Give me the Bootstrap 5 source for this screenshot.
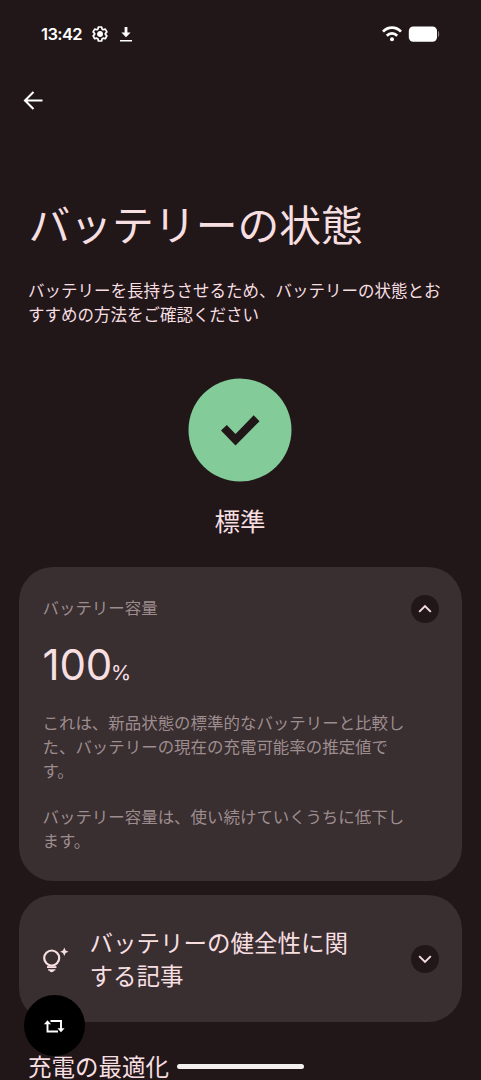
<!DOCTYPE html>
<html lang="ja">
<head>
<meta charset="utf-8">
<meta name="viewport" content="width=device-width, initial-scale=1">
<title>バッテリーの状態</title>
<link rel="stylesheet" href="https://cdn.jsdelivr.net/npm/bootstrap@5.3.0/dist/css/bootstrap.min.css">
<style>
  body { background: #211719; color: #f7dfe1; font-family: "Noto Sans CJK JP", sans-serif; }
  svg { display: block; flex: none; }
  .screen { height: 1080px; }
  .status-bar { height: 68px; padding: 0 41px 0 41px; color: #fff; }
  .clock { font: 600 16.5px/20px Inter, sans-serif; letter-spacing: -.6px; width: 51px; }
  .download-icon { margin-left: 11px; }
  .battery-icon { margin-left: 6px; }
  .app-bar { height: 64px; padding-left: 20px; color: #fff; }
  .page-title { font-size: 41.8px; line-height: 56px; font-weight: 400; margin: 63px 28px 0 28.5px; }
  .intro { font-size: 16.5px; line-height: 24px; margin: 27px 28px 0; width: 416px; }
  .health { margin-top: 52px; margin-right: 1px; }
  .health-label { font-size: 25.5px; line-height: 36px; margin-top: 20px; }
  .panel { background: #392e30; border-radius: 34px; margin: 0 19px; }
  .capacity { height: 314px; margin-top: 29px; padding: 28px 23px 0 23.5px; }
  .muted-text { color: #9d8d8f; font-size: 16.47px; line-height: 24.2px; }
  .capacity-label { position: relative; top: -1.5px; }
  .toggle { width: 28px; height: 28px; background: #211719; color: #f7dfe1; flex: none; }
  .figure-value { font-family: Inter, sans-serif; font-size: 42px; line-height: 50px; font-weight: 400; margin-top: 17px; letter-spacing: -.2px; }
  .figure-unit { font-size: 20.5px; letter-spacing: 0; margin-left: -1px; }
  .estimate { margin-top: 12px; }
  .decline { margin-top: 21px; }
  .articles { height: 127px; margin-top: 14px; padding: 0 23.5px 0 21px; }
  .articles-title { font-size: 23.5px; line-height: 33px; width: 275px; margin-left: 19.5px; }
  .section-title { font-size: 23.5px; line-height: 34px; margin: 27px 28px 0; position: relative; z-index: 2; }
  .rotate-fab { width: 61px; height: 61px; left: 23.5px; top: 995px; background: #000; color: #fff; }
  .home-bar { width: 127px; height: 5px; left: 177px; top: 1064px; background: #f5f0f0; z-index: 3; }
</style>
</head>
<body>
<main class="screen position-relative overflow-hidden d-flex flex-column">
  <div class="status-bar d-flex align-items-center flex-shrink-0">
    <span class="clock">13:42</span>
    <svg width="16" height="16" viewBox="0 0 24 24" fill="none" stroke="currentColor" stroke-width="2.6" stroke-linejoin="round"><path d="M9.6 1.5h4.8l.8 3.2 1.6.9 3.1-.9 2.4 4.2L20 11.500v1l2.300 2.400-2.400 4.200-3.100-.9-1.600.9-.8 3.400H9.600l-.8-3.400-1.600-.9-3.100.9-2.400-4.200L4 12.500v-1L1.700 8.900l2.400-4.200 3.100.9 1.600-.9z"/><circle cx="12" cy="12" r="3.2" fill="currentColor"/></svg>
    <svg class="download-icon" width="14" height="18" viewBox="0 0 14 18"><path d="M5.600 2h2.800v5.500h3.200L7 12.200 2.400 7.500h3.200zM1 15h12v1.500H1z" fill="currentColor"/></svg>
    <svg class="ms-auto" width="20" height="16" viewBox="0 0 20 16" fill="none" stroke="currentColor" stroke-width="2.700"><path d="M1 5.600C6 .2 14 .2 19 5.600M4.800 9.700c3-3 7.400-3 10.400 0"/><circle cx="10" cy="13.200" r="2" fill="currentColor" stroke="none"/></svg>
    <svg class="battery-icon" width="32" height="16" viewBox="0 0 32 16"><rect x=".8" y=".5" width="28.200" height="15.300" rx="4.500" fill="currentColor"/><path d="M30 5c1.600.2 1.600 5.800 0 6z" fill="#8c8485"/></svg>
  </div>
  <div class="app-bar d-flex align-items-center flex-shrink-0">
    <svg width="26" height="26" viewBox="0 0 26 26" fill="none" stroke="currentColor" stroke-width="2.100"><path d="M22.500 13.500H5M13.500 5 5 13.500l8.500 8.500"/></svg>
  </div>
  <h1 class="page-title">バッテリーの状態</h1>
  <p class="intro">バッテリーを長持ちさせるため、バッテリーの状態とお<br>すすめの方法をご確認ください</p>
  <div class="health d-flex flex-column align-items-center">
    <svg width="104" height="104" viewBox="0 0 104 104"><circle cx="52" cy="52" r="51.500" fill="#83cb99"/><path d="m33 52.500 5.800-5.500 8.700 9 18.200-18.700 5.800 5.900L47.500 67.500z" fill="#211719"/></svg>
    <div class="health-label">標準</div>
  </div>
  <section class="panel capacity flex-shrink-0">
    <div class="d-flex justify-content-between align-items-center">
      <span class="capacity-label muted-text">バッテリー容量</span>
      <span class="toggle rounded-circle d-flex align-items-center justify-content-center">
        <svg width="14" height="14" viewBox="0 0 14 14" fill="none" stroke="currentColor" stroke-width="1.900"><path d="m1.200 9.800 5.800-5.800 5.800 5.800"/></svg>
      </span>
    </div>
    <div class="figure-value">100<span class="figure-unit">%</span></div>
    <p class="estimate muted-text mb-0">これは、新品状態の標準的なバッテリーと比較し<br>た、バッテリーの現在の充電可能率の推定値で<br>す。</p>
    <p class="decline muted-text mb-0">バッテリー容量は、使い続けていくうちに低下し<br>ます。</p>
  </section>
  <section class="panel articles d-flex align-items-center flex-shrink-0">
    <svg width="30" height="30" viewBox="0 0 30 30" fill="none" stroke="currentColor" stroke-width="2.200"><circle cx="11.700" cy="14" r="7.500"/><path d="M7 23.100h9.400" stroke-width="1.900"/><path d="M8 25.200h7.400v1.200h-1.200q-.5 1.800-2.500 1.800t-2.500-1.800H8zM24.300 3.600l1.300 2.900 2.900 1.300-2.900 1.300-1.300 2.900-1.300-2.900-2.900-1.300 2.900-1.300z" fill="currentColor" stroke="none"/></svg>
    <div class="articles-title">バッテリーの健全性に関<br>する記事</div>
    <span class="toggle ms-auto rounded-circle d-flex align-items-center justify-content-center">
      <svg width="14" height="14" viewBox="0 0 14 14" fill="none" stroke="currentColor" stroke-width="1.900"><path d="m1.200 4.200 5.800 5.800 5.800-5.800"/></svg>
    </span>
  </section>
  <h2 class="section-title fw-normal">充電の最適化</h2>
  <button class="rotate-fab btn p-0 border-0 rounded-circle position-absolute d-flex align-items-center justify-content-center" aria-label="回転">
    <svg width="22" height="16" viewBox="0 0 22 16" fill="none" stroke="currentColor" stroke-width="1.900"><path d="M4.500 4v9.500h10.500M7.500 3h10.500v9"/><path d="M.9 6.300 4.500 2.300l3.600 4zM14.400 10.200l3.600 4 3.600-4z" fill="currentColor" stroke="none"/></svg>
  </button>
  <div class="home-bar rounded-pill position-absolute"></div>
</main>
<script src="https://cdn.jsdelivr.net/npm/bootstrap@5.3.0/dist/js/bootstrap.bundle.min.js"></script>
</body>
</html>
